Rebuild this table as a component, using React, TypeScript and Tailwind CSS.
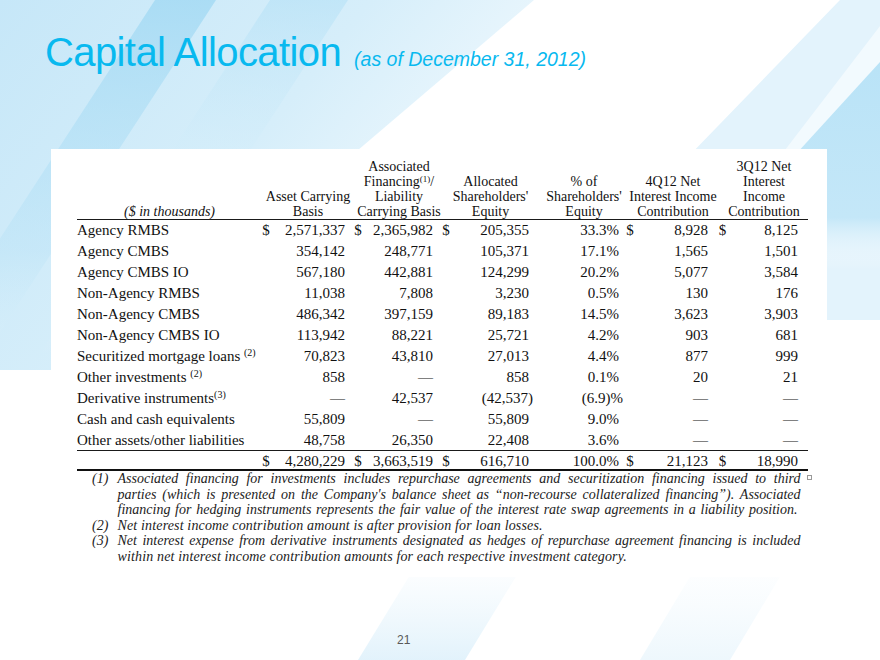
import type { ReactNode } from 'react';

// Capital allocation slide: title over a pale-blue striped backdrop, then a white panel with the table.

type Row = {
  label: ReactNode;
  v: string[];
  dollars?: boolean;
};

const ROWS: Row[] = [
  { label: 'Agency RMBS', v: ['2,571,337', '2,365,982', '205,355', '33.3%', '8,928', '8,125'], dollars: true },
  { label: 'Agency CMBS', v: ['354,142', '248,771', '105,371', '17.1%', '1,565', '1,501'] },
  { label: 'Agency CMBS IO', v: ['567,180', '442,881', '124,299', '20.2%', '5,077', '3,584'] },
  { label: 'Non-Agency RMBS', v: ['11,038', '7,808', '3,230', '0.5%', '130', '176'] },
  { label: 'Non-Agency CMBS', v: ['486,342', '397,159', '89,183', '14.5%', '3,623', '3,903'] },
  { label: 'Non-Agency CMBS IO', v: ['113,942', '88,221', '25,721', '4.2%', '903', '681'] },
  {
    label: (
      <>
        Securitized mortgage loans <sup className="text-[10px]">(2)</sup>
      </>
    ),
    v: ['70,823', '43,810', '27,013', '4.4%', '877', '999'],
  },
  {
    label: (
      <>
        Other investments <sup className="text-[10px]">(2)</sup>
      </>
    ),
    v: ['858', '—', '858', '0.1%', '20', '21'],
  },
  {
    label: (
      <>
        Derivative instruments<sup className="text-[10px]">(3)</sup>
      </>
    ),
    v: ['—', '42,537', '(42,537)', '(6.9)%', '—', '—'],
  },
  { label: 'Cash and cash equivalents', v: ['55,809', '—', '55,809', '9.0%', '—', '—'] },
  { label: 'Other assets/other liabilities', v: ['48,758', '26,350', '22,408', '3.6%', '—', '—'] },
];

const TOTAL = ['4,280,229', '3,663,519', '616,710', '100.0%', '21,123', '18,990'];

const HEADS: { w: string; lines: ReactNode[] }[] = [
  { w: 'w-[92px]', lines: ['Asset Carrying', 'Basis'] },
  {
    w: 'w-[90px]',
    lines: [
      'Associated',
      <>
        Financing<sup className="text-[9px]">(1)</sup>/
      </>,
      'Liability',
      'Carrying Basis',
    ],
  },
  { w: 'w-[93px]', lines: ['Allocated', "Shareholders'", 'Equity'] },
  { w: 'w-[94px]', lines: ['% of', "Shareholders'", 'Equity'] },
  { w: 'w-[84px]', lines: ['4Q12 Net', 'Interest Income', 'Contribution'] },
  { w: 'w-[98px]', lines: ['3Q12 Net', 'Interest', 'Income', 'Contribution'] },
];

const GRID =
  'grid grid-cols-[179px_20px_74px_16px_72px_16px_80px_88px_16px_75px_19px_76px] items-center';

// parenthesised negatives hang a few px past the column edge
function Num({ s }: { s: string }) {
  return <span className={s.startsWith('(') ? '-mr-[4px]' : ''}>{s}</span>;
}

function DataRow({ row, last }: { row: Row; last: boolean }) {
  const d = row.dollars ? '$' : '';
  return (
    <div className={`${GRID} h-[21px] ${last ? 'border-b border-[#1a1a1a]' : ''}`}>
      <div className="whitespace-nowrap">{row.label}</div>
      <div className="text-center">{d}</div>
      <div className="pr-[5px] text-right">
        <Num s={row.v[0]} />
      </div>
      <div className="text-center">{d}</div>
      <div className="pr-[5px] text-right">
        <Num s={row.v[1]} />
      </div>
      <div className="text-center">{d}</div>
      <div className="pr-[5px] text-right">
        <Num s={row.v[2]} />
      </div>
      <div className="pr-[3px] text-right">
        <Num s={row.v[3]} />
      </div>
      <div className="text-center">{d}</div>
      <div className="pr-[5px] text-right">{row.v[4]}</div>
      <div className="text-center">{d}</div>
      <div className="pr-[10px] text-right">{row.v[5]}</div>
    </div>
  );
}

function Backdrop() {
  return (
    <svg className="absolute inset-0" width={880} height={660} viewBox="0 0 880 660">
      <defs>
        <linearGradient id="base" gradientUnits="userSpaceOnUse" x1="0" y1="0" x2="640" y2="520">
          <stop offset="0" stopColor="#c6e7f8" />
          <stop offset="0.35" stopColor="#d6eefa" />
          <stop offset="0.62" stopColor="#f3fafe" />
          <stop offset="0.8" stopColor="#ffffff" />
        </linearGradient>
        <linearGradient id="fadeY" gradientUnits="userSpaceOnUse" x1="0" y1="0" x2="0" y2="420">
          <stop offset="0" stopColor="#9fd8f3" stopOpacity="0.75" />
          <stop offset="0.6" stopColor="#b5e1f6" stopOpacity="0.35" />
          <stop offset="1" stopColor="#ffffff" stopOpacity="0" />
        </linearGradient>
        <linearGradient id="fadeY2" gradientUnits="userSpaceOnUse" x1="0" y1="0" x2="0" y2="360">
          <stop offset="0" stopColor="#b2e0f6" stopOpacity="0.55" />
          <stop offset="1" stopColor="#ffffff" stopOpacity="0" />
        </linearGradient>
        <linearGradient id="rightDeep" gradientUnits="userSpaceOnUse" x1="0" y1="60" x2="0" y2="270">
          <stop offset="0" stopColor="#b9e3f7" />
          <stop offset="0.75" stopColor="#c4e7f8" />
          <stop offset="1" stopColor="#ffffff" stopOpacity="0" />
        </linearGradient>
        <linearGradient id="bottomFaint" gradientUnits="userSpaceOnUse" x1="0" y1="560" x2="0" y2="660">
          <stop offset="0" stopColor="#e6f4fc" stopOpacity="0" />
          <stop offset="1" stopColor="#dff1fb" stopOpacity="0.9" />
        </linearGradient>
      </defs>
      <rect width="880" height="660" fill="#ffffff" />
      {/* pale blue wash from the top-left, cut off by a diagonal edge */}
      <polygon points="0,0 534,0 100,370 0,370" fill="url(#base)" />
      {/* stripes */}
      <polygon points="155,0 216,0 -57,420 -118,420" fill="url(#fadeY)" />
      <polygon points="270,0 348,0 114,360 36,360" fill="url(#fadeY2)" />
      {/* top-right light sheet */}
      <polygon points="840,0 880,0 880,320 530,320" fill="#e3f3fc" />
      <polygon points="900,0 930,0 700,300 670,300" fill="#ffffff" opacity="0.55" />
      <polygon points="900,40 900,270 690,270" fill="url(#rightDeep)" />
      {/* faint stripes at the bottom */}
      <polygon points="413,570 520,570 465,660 358,660" fill="url(#bottomFaint)" />
      <polygon points="700,560 790,560 730,660 640,660" fill="url(#bottomFaint)" opacity="0.6" />
    </svg>
  );
}

export default function App() {
  return (
    <div className="relative h-[660px] w-[880px] overflow-hidden bg-white">
      <Backdrop />
      <div className="relative flex flex-col">
        <div className="flex items-baseline pl-[45px] pt-[32px] font-['Liberation_Sans',Arial,sans-serif] text-[#08b9ef]">
          <h1 className="text-[40px] leading-[40px] tracking-[-0.6px]">Capital Allocation</h1>
          <span className="ml-[13px] text-[19.5px] italic">(as of December 31, 2012)</span>
        </div>

        <div className="ml-[51px] mt-[75px] w-[776px] bg-white pb-[13px] pl-[26px] pt-[11px] font-['Liberation_Serif','Times_New_Roman',serif] text-[#111]">
          {/* column headings */}
          <div className="flex h-[60px] w-[731px] items-end border-b border-[#1a1a1a] text-[14px] leading-[15px]">
            <div className="flex w-[185px] shrink-0 justify-center italic">($ in thousands)</div>
            {HEADS.map((h, i) => (
              <div key={i} className={`flex shrink-0 flex-col items-center whitespace-nowrap ${h.w}`}>
                {h.lines.map((l, j) => (
                  <div key={j}>{l}</div>
                ))}
              </div>
            ))}
          </div>

          <div className="w-[731px] text-[15px] leading-[21px]">
            {ROWS.map((r, i) => (
              <DataRow key={i} row={r} last={i === ROWS.length - 1} />
            ))}
            <div className={`${GRID} h-[20px] border-b-2 border-[#111]`}>
              <div />
              <div className="text-center">$</div>
              <div className="pr-[5px] text-right">{TOTAL[0]}</div>
              <div className="text-center">$</div>
              <div className="pr-[5px] text-right">{TOTAL[1]}</div>
              <div className="text-center">$</div>
              <div className="pr-[5px] text-right">{TOTAL[2]}</div>
              <div className="pr-[3px] text-right">{TOTAL[3]}</div>
              <div className="text-center">$</div>
              <div className="pr-[5px] text-right">{TOTAL[4]}</div>
              <div className="text-center">$</div>
              <div className="pr-[10px] text-right">{TOTAL[5]}</div>
            </div>
          </div>

          {/* footnotes */}
          <div className="flex flex-col pl-[15px] text-[14px] italic leading-[15.5px] text-[#222]">
            <div className="flex">
              <div className="w-[25.5px] shrink-0">(1)</div>
              <div className="w-[683px]">
                <div className="relative text-justify [text-align-last:justify]">
                  Associated financing for investments includes repurchase agreements and securitization financing issued to third
                  <span className="absolute -right-[11px] top-[4px] h-[5px] w-[5px] border border-[#999]" />
                </div>
                <div className="text-justify [text-align-last:justify]">
                  parties (which is presented on the Company's balance sheet as “non-recourse collateralized financing”). Associated
                </div>
                <div className="w-[680px] text-justify [text-align-last:justify]">
                  financing for hedging instruments represents the fair value of the interest rate swap agreements in a liability position.
                </div>
              </div>
            </div>
            <div className="flex">
              <div className="w-[25.5px] shrink-0">(2)</div>
              <div className="w-[683px] tracking-[0.15px]">
                Net interest income contribution amount is after provision for loan losses.
              </div>
            </div>
            <div className="flex">
              <div className="w-[25.5px] shrink-0">(3)</div>
              <div className="w-[683px]">
                <div className="text-justify [text-align-last:justify]">
                  Net interest expense from derivative instruments designated as hedges of repurchase agreement financing is included
                </div>
                <div className="tracking-[0.15px]">
                  within net interest income contribution amounts for each respective investment category.
                </div>
              </div>
            </div>
          </div>
        </div>

        <div className="mt-[56px] pl-[397px] font-['Liberation_Sans',Arial,sans-serif] text-[12px] leading-[14px] text-[#595959]">
          21
        </div>
      </div>
    </div>
  );
}
